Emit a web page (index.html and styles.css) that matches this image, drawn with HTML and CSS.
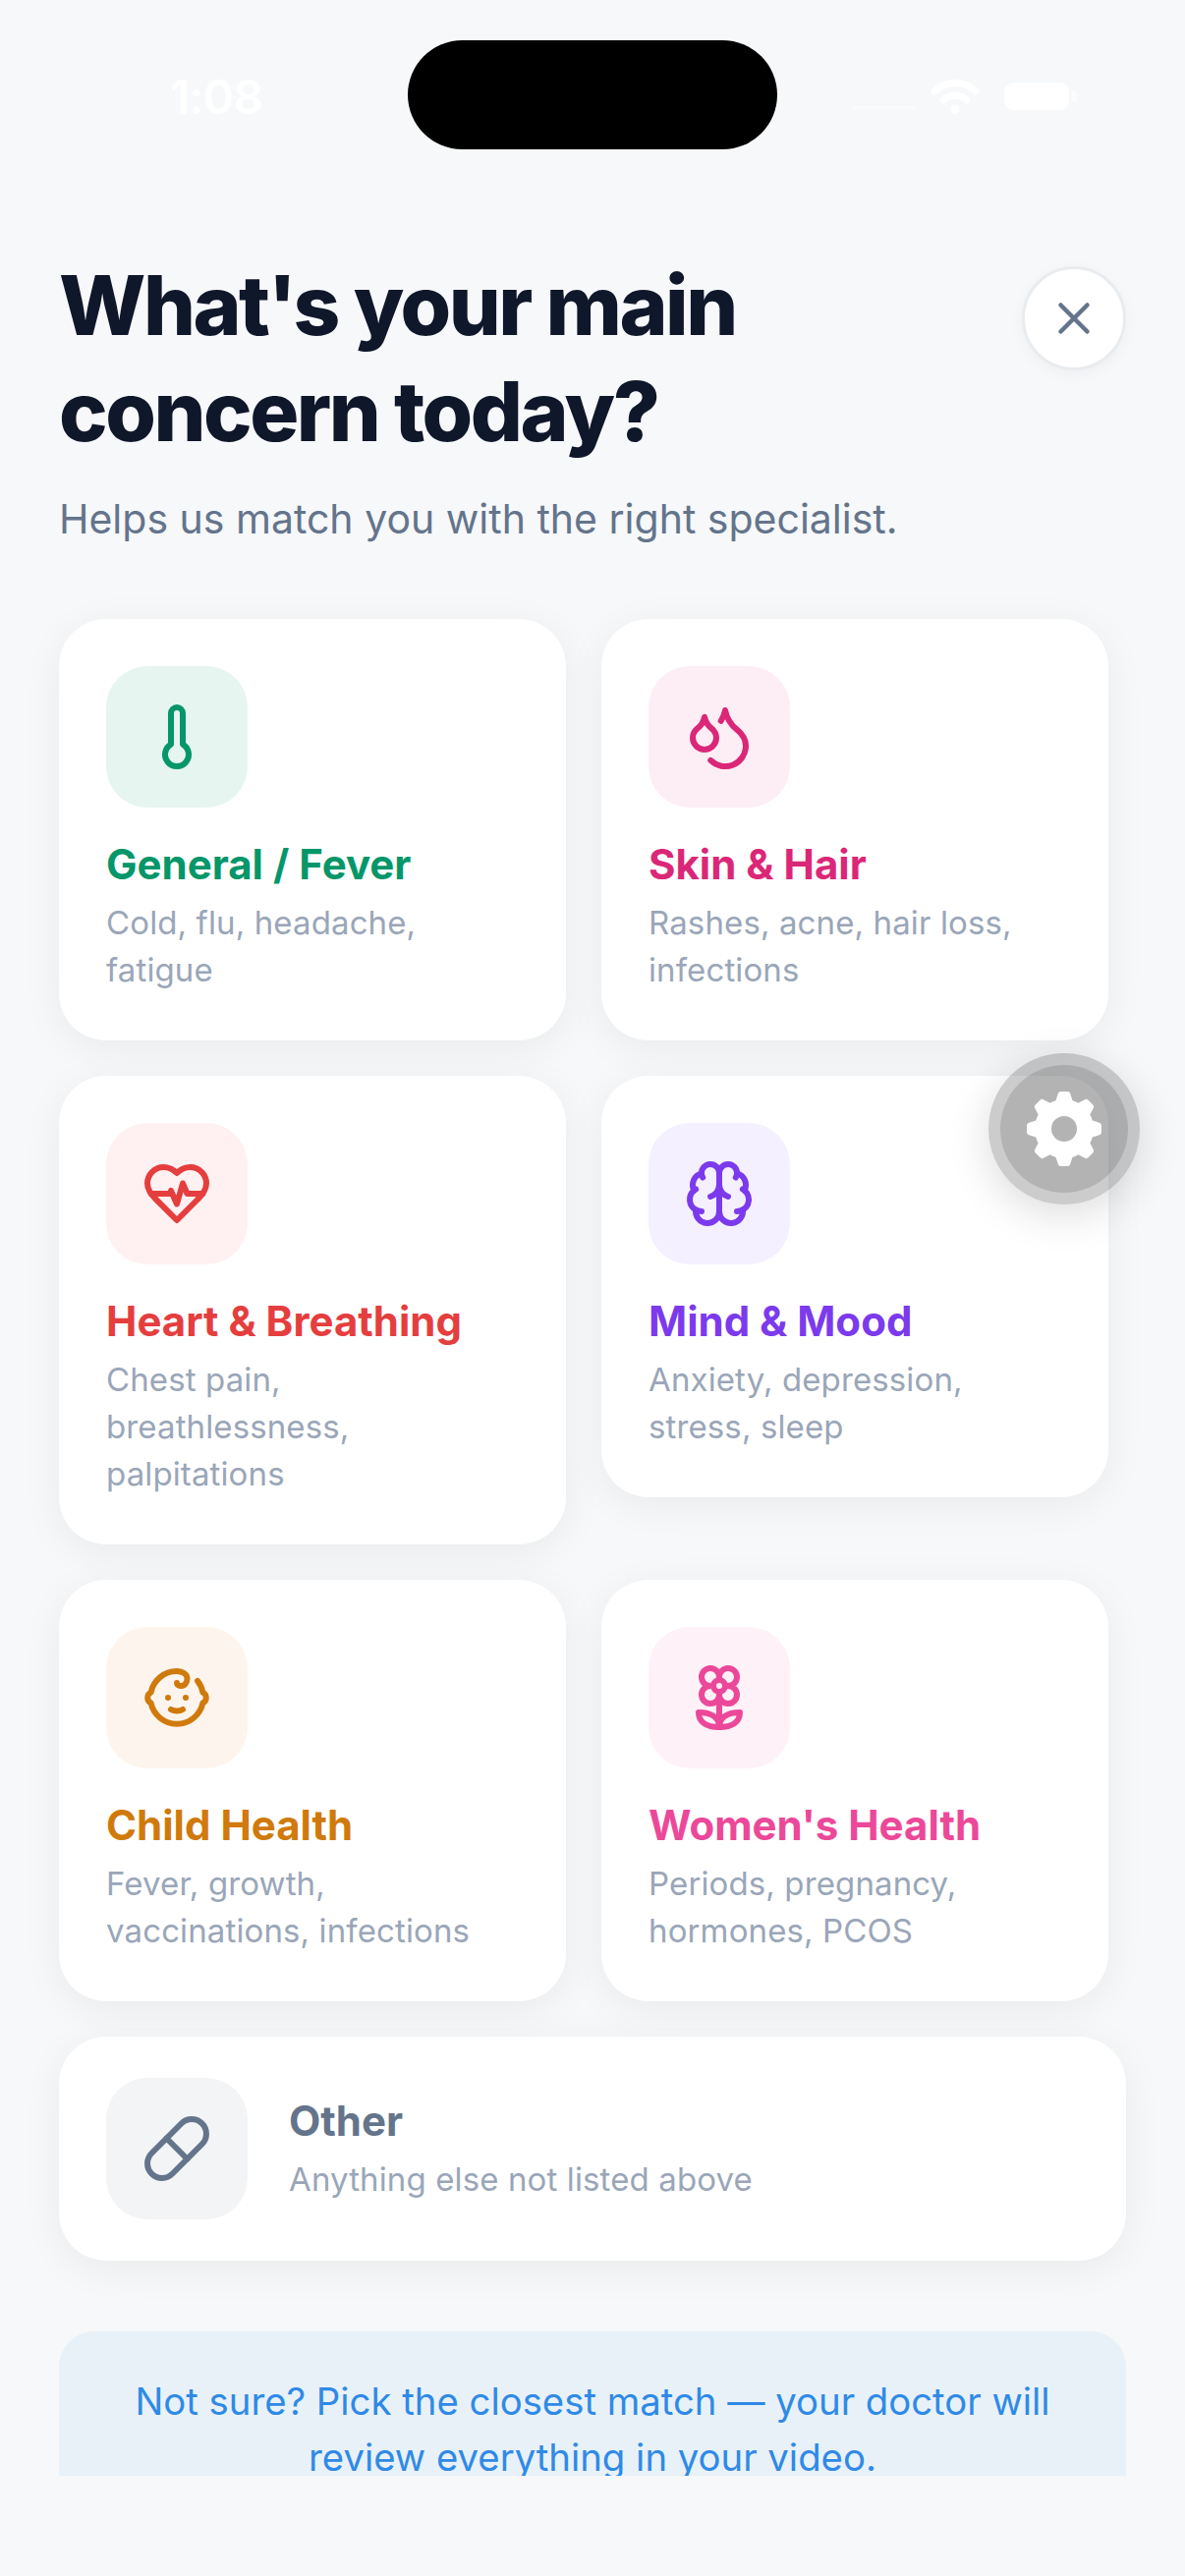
FILE: index.html
```html
<!DOCTYPE html>
<html lang="en">
<head>
  <meta charset="UTF-8" />
  <title>Main concern</title>
  <meta name="viewport" content="width=device-width, initial-scale=1.0" />
  <link rel="stylesheet" href="styles.css">
</head>
<body>
  <div class="screen">
    <div class="status-bar">
      <span class="time">1:08</span>
      <div class="status-icons">
        <svg class="signal" width="66" height="12" viewBox="0 0 66 12"><rect x="0" y="5" width="66" height="3" rx="1.5" fill="#fff"/></svg>
        <svg width="50" height="38" viewBox="0 0 50 38" fill="none" stroke="#fff" stroke-width="7" stroke-linecap="round"><path d="M4 14a30 30 0 0 1 42 0"/><path d="M13 23a17 17 0 0 1 24 0"/><circle cx="25" cy="32" r="3" fill="#fff" stroke-width="3"/></svg>
        <div class="battery"></div>
      </div>
    </div>
    <div class="island"></div>

    <div class="content">
      <div class="header">
        <h1>What's your main concern today?</h1>
        <button class="close-btn">
          <svg width="54" height="54" viewBox="0 0 24 24" fill="none" stroke="#64748b" stroke-width="2" stroke-linecap="round" stroke-linejoin="round"><path d="M18 6 6 18"/><path d="m6 6 12 12"/></svg>
        </button>
      </div>
      <p class="subtitle">Helps us match you with the right specialist.</p>

      <div class="grid">
        <div class="card green">
          <div class="icon-box">
            <svg class="icon" viewBox="0 0 24 24"><path d="M14 4v10.54a4 4 0 1 1-4 0V4a2 2 0 0 1 4 0Z"/></svg>
          </div>
          <h2>General / Fever</h2>
          <p>Cold, flu, headache, fatigue</p>
        </div>
        <div class="card rose">
          <div class="icon-box">
            <svg class="icon" viewBox="0 0 24 24"><path d="M7 16.3c2.2 0 4-1.83 4-4.05 0-1.16-.57-2.26-1.71-3.19S7.29 6.75 7 5.3c-.29 1.45-1.14 2.84-2.29 3.76S3 11.1 3 12.25c0 2.22 1.8 4.05 4 4.05z"/><path d="M12.56 6.6A10.97 10.97 0 0 0 14 3.02c.5 2.5 2 4.9 4 6.5s3 3.5 3 5.5a6.98 6.98 0 0 1-11.91 4.97"/></svg>
          </div>
          <h2>Skin &amp; Hair</h2>
          <p>Rashes, acne, hair loss, infections</p>
        </div>
        <div class="card red">
          <div class="icon-box">
            <svg class="icon" viewBox="0 0 24 24"><path d="M19 14c1.49-1.46 3-3.21 3-5.5A5.5 5.5 0 0 0 16.5 3c-1.76 0-3 .5-4.5 2-1.5-1.5-2.74-2-4.5-2A5.5 5.5 0 0 0 2 8.5c0 2.3 1.5 4.05 3 5.5l7 7Z"/><path d="M3.22 12H9.5l.5-1 2 4.5 2-7 1.5 3.5h5.27"/></svg>
          </div>
          <h2>Heart &amp; Breathing</h2>
          <p>Chest pain, breathlessness, palpitations</p>
        </div>
        <div class="card violet">
          <div class="icon-box">
            <svg class="icon" viewBox="0 0 24 24"><path d="M12 5a3 3 0 1 0-5.997.125 4 4 0 0 0-2.526 5.77 4 4 0 0 0 .556 6.588A4 4 0 1 0 12 18Z"/><path d="M12 5a3 3 0 1 1 5.997.125 4 4 0 0 1 2.526 5.77 4 4 0 0 1-.556 6.588A4 4 0 1 1 12 18Z"/><path d="M15 13a4.5 4.5 0 0 1-3-4 4.5 4.5 0 0 1-3 4"/><path d="M17.599 6.5a3 3 0 0 0 .399-1.375"/><path d="M6.003 5.125A3 3 0 0 0 6.401 6.5"/><path d="M3.477 10.896a4 4 0 0 1 .585-.396"/><path d="M19.938 10.5a4 4 0 0 1 .585.396"/><path d="M6 18a4 4 0 0 1-1.967-.516"/><path d="M19.967 17.484A4 4 0 0 1 18 18"/></svg>
          </div>
          <h2>Mind &amp; Mood</h2>
          <p>Anxiety, depression, stress, sleep</p>
        </div>
        <div class="card amber">
          <div class="icon-box">
            <svg class="icon" viewBox="0 0 24 24"><path d="M9 12h.01"/><path d="M15 12h.01"/><path d="M10 16c.5.3 1.2.5 2 .5s1.5-.2 2-.5"/><path d="M19 6.3a9 9 0 0 1 1.8 3.9 2 2 0 0 1 0 3.6 9 9 0 0 1-17.6 0 2 2 0 0 1 0-3.6A9 9 0 0 1 12 3c2 0 3.5 1.1 3.5 2.5s-.9 2.5-2 2.5c-.8 0-1.5-.4-1.5-1"/></svg>
          </div>
          <h2>Child Health</h2>
          <p>Fever, growth, vaccinations, infections</p>
        </div>
        <div class="card pink">
          <div class="icon-box">
            <svg class="icon" viewBox="0 0 24 24"><path d="M12 5a3 3 0 1 1 3 3m-3-3a3 3 0 1 0-3 3m3-3v1M9 8a3 3 0 1 0 3 3M9 8h1m5 0a3 3 0 1 1-3 3m3-3h-1m-2 3v-1"/><circle cx="12" cy="8" r="2"/><path d="M12 10v12"/><path d="M12 22c4.2 0 7-1.667 7-5-4.2 0-7 1.667-7 5Z"/><path d="M12 22c-4.2 0-7-1.667-7-5 4.2 0 7 1.667 7 5Z"/></svg>
          </div>
          <h2>Women's Health</h2>
          <p>Periods, pregnancy, hormones, PCOS</p>
        </div>
      </div>

      <div class="card other slate">
        <div class="icon-box">
          <svg class="icon" viewBox="0 0 24 24"><path d="m10.5 20.5 10-10a4.95 4.95 0 1 0-7-7l-10 10a4.95 4.95 0 1 0 7 7Z"/><path d="m8.5 8.5 7 7"/></svg>
        </div>
        <div>
          <h2>Other</h2>
          <p>Anything else not listed above</p>
        </div>
      </div>

      <div class="note">Not sure? Pick the closest match — your doctor will review everything in your video.</div>
    </div>

    <div class="fab">
      <div class="fab-inner">
        <svg width="84" height="84" viewBox="-42 -42 84 84" fill="#fff">
          <defs>
            <path id="tooth" d="M-10 -24 L-6.5 -35 Q-6 -38 -3 -38 L3 -38 Q6 -38 6.5 -35 L10 -24 Z"/>
          </defs>
          <circle r="21.5" fill="none" stroke="#fff" stroke-width="17"/>
          <use href="#tooth"/>
          <use href="#tooth" transform="rotate(45)"/>
          <use href="#tooth" transform="rotate(90)"/>
          <use href="#tooth" transform="rotate(135)"/>
          <use href="#tooth" transform="rotate(180)"/>
          <use href="#tooth" transform="rotate(225)"/>
          <use href="#tooth" transform="rotate(270)"/>
          <use href="#tooth" transform="rotate(315)"/>
        </svg>
      </div>
    </div>
  </div>
</body>
</html>
```

FILE: styles.css
```css
* {
  box-sizing: border-box;
}

body {
  margin: 0;
  font-family: Inter, "Liberation Sans", sans-serif;
  background-color: #f6f8fa;
}

.screen {
  position: relative;
  width: 1206px;
  height: 2622px;
  overflow: hidden;
}

/* status bar */
.status-bar {
  display: flex;
  justify-content: space-between;
  align-items: center;
  height: 196px;
  padding: 0 118px 0 173px;
  color: #fff;
}

.time {
  font-size: 48px;
  font-weight: 600;
  letter-spacing: -1px;
}

.status-icons {
  display: flex;
  align-items: center;
  gap: 25px;
}

.signal {
  opacity: 0.5;
  margin-top: 22px;
  margin-right: -9px;
}

.battery {
  position: relative;
  width: 66px;
  height: 28px;
  border-radius: 9px;
  background: #fff;
}

.battery::after {
  content: "";
  position: absolute;
  left: 68px;
  top: 8px;
  width: 6px;
  height: 12px;
  border-radius: 0 4px 4px 0;
  background: rgba(255,255,255,0.6);
}

.island {
  position: absolute;
  left: 415px;
  top: 41px;
  width: 376px;
  height: 111px;
  border-radius: 56px;
  background: #000;
}

/* scrolling part, cut off above the home bar */
.content {
  height: 2324px;
  padding: 61px 60px 0;
  overflow: hidden;
}

.header {
  display: flex;
  justify-content: space-between;
  align-items: flex-start;
}

h1 {
  margin: 0;
  width: 800px;
  font-size: 83.5px;
  line-height: 108px;
  font-weight: 800;
  letter-spacing: -2.5px;
  color: #0f172a;
}

.close-btn {
  display: flex;
  align-items: center;
  justify-content: center;
  width: 106px;
  height: 106px;
  margin-top: 14px;
  padding: 0;
  border: 3px solid #e9ecef;
  border-radius: 50%;
  background: #fff;
  box-shadow: 0 4px 16px rgba(0,0,0,0.04);
}

.subtitle {
  margin: 25px 0 0;
  font-size: 41px;
  line-height: 60px;
  color: #64748b;
}

.grid {
  display: grid;
  grid-template-columns: 516px 516px;
  gap: 36px;
  align-items: start;
  margin-top: 72px;
}

.card {
  padding: 48px;
  border-radius: 48px;
  background: #fff;
  box-shadow: 0 8px 40px rgba(0,0,0,0.06);
}

.card h2 {
  margin: 29px 0 0;
  font-size: 42px;
  line-height: 58px;
  font-weight: 700;
}

.card p {
  margin: 6px 0 0;
  font-size: 33px;
  line-height: 48px;
  letter-spacing: 0.12px;
  color: #9aa6b8;
}

.icon-box {
  display: flex;
  align-items: center;
  justify-content: center;
  flex-shrink: 0;
  width: 144px;
  height: 144px;
  border-radius: 42px;
}

.icon {
  width: 72px;
  height: 72px;
  fill: none;
  stroke: currentColor;
  stroke-width: 2;
  stroke-linecap: round;
  stroke-linejoin: round;
}

.green h2, .green .icon { color: #059669; }
.green .icon-box { background: #e6f5f0; }
.rose h2, .rose .icon { color: #db2777; }
.rose .icon-box { background: #fdeef6; }
.red h2, .red .icon { color: #e53e3e; }
.red .icon-box { background: #fff1f1; }
.violet h2, .violet .icon { color: #7c3aed; }
.violet .icon-box { background: #f4f0ff; }
.amber h2, .amber .icon { color: #d07a0c; }
.amber .icon-box { background: #fdf5ed; }
.pink h2, .pink .icon { color: #ec4899; }
.pink .icon-box { background: #fef1f8; }
.slate h2, .slate .icon { color: #64748b; }
.slate .icon-box { background: #f2f4f6; }

.other {
  display: flex;
  align-items: center;
  gap: 42px;
  margin-top: 36px;
  padding: 42px 48px;
}

.card.other h2 {
  margin: -2px 0 0;
}

.note {
  margin-top: 72px;
  padding: 43px 60px;
  border-radius: 36px;
  background: #e8f1f8;
  font-size: 38.3px;
  line-height: 57px;
  text-align: center;
  color: #2f8ae6;
}

/* floating settings button */
.fab {
  position: absolute;
  left: 1006px;
  top: 1072px;
  display: flex;
  align-items: center;
  justify-content: center;
  width: 154px;
  height: 154px;
  border-radius: 50%;
  background: rgba(0,0,0,0.2);
  box-shadow: 0 10px 44px rgba(0,0,0,0.14);
}

.fab-inner {
  display: flex;
  align-items: center;
  justify-content: center;
  width: 130px;
  height: 130px;
  border-radius: 50%;
  background: rgba(0,0,0,0.12);
}
```
